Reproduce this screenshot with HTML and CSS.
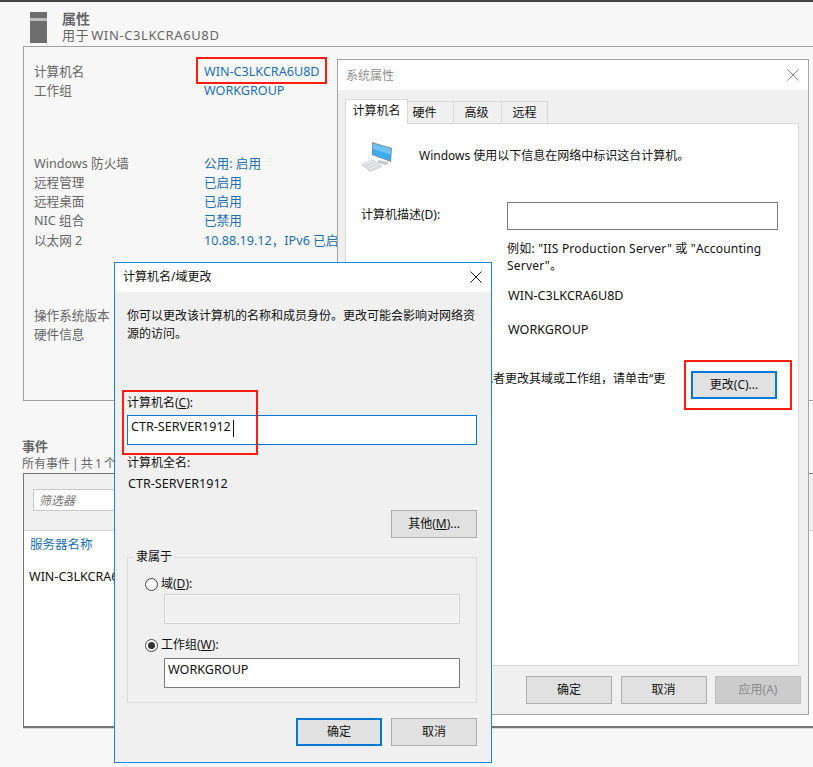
FILE: index.html
```html
<!DOCTYPE html>
<html lang="zh-CN">
<head>
<meta charset="utf-8">
<title>属性</title>
<link rel="stylesheet" href="styles.css">
</head>
<body>
<div class="desktop">
  <div class="topbar"></div>
  <header class="head">
    <div class="server-icon"><span class="server-band"></span></div>
    <div class="head-text">
      <h1 class="head-title">属性</h1>
      <div class="head-sub">用于 WIN-C3LKCRA6U8D</div>
    </div>
  </header>
  <section class="props">
    <div class="prop-group group-a">
      <span class="k">计算机名</span><span class="v">WIN-C3LKCRA6U8D</span>
      <span class="k">工作组</span><span class="v">WORKGROUP</span>
    </div>
    <div class="prop-group group-b">
      <span class="k">Windows 防火墙</span><span class="v">公用: 启用</span>
      <span class="k">远程管理</span><span class="v">已启用</span>
      <span class="k">远程桌面</span><span class="v">已启用</span>
      <span class="k">NIC 组合</span><span class="v">已禁用</span>
      <span class="k">以太网 2</span><span class="v">10.88.19.12，IPv6 已启用</span>
    </div>
    <div class="prop-group group-c">
      <span class="k">操作系统版本</span><span class="v"></span>
      <span class="k">硬件信息</span><span class="v"></span>
    </div>
  </section>
  <section class="events">
    <h2 class="events-title">事件</h2>
    <div class="events-sub">所有事件 | 共 1 个</div>
    <div class="events-box">
      <div class="filter-bar"><div class="filter">筛选器</div></div>
      <div class="col-head">服务器名称</div>
      <div class="event-row">WIN-C3LKCRA6U8D</div>
    </div>
  </section>

  <div class="window sys">
    <div class="titlebar"><span class="title-muted">系统属性</span>
      <svg class="close close-sys" viewBox="0 0 12 12" width="12" height="12"><path d="M.5.5l11 11M11.5.5l-11 11" class="close-muted"/></svg>
    </div>
    <div class="sys-body">
      <div class="tabs">
        <div class="tab active">计算机名</div>
        <div class="tab tab-hw">硬件</div>
        <div class="tab tab-adv">高级</div>
        <div class="tab tab-rem">远程</div>
      </div>
      <div class="pane">
        <div class="intro">
          <svg class="pc" viewBox="0 0 34 32" width="34" height="32">
            <path d="M1 24.5L13 19l10 8-13 5z" fill="#d6dadd"/>
            <path d="M4 25l9-4M7 27l9-4M10 29l9-4" stroke="#f4f5f6" stroke-width="1" fill="none"/>
            <path d="M18 20l10 2 0 2-3 1-7-2z" fill="#c3c8cc"/>
            <path d="M12 2l20 6-1 14-19-7z" fill="#7f8b95"/>
            <path d="M12.8 3.4l18.4 5.3-.9 12.3-17.5-6.5z" fill="#3fabef"/>
            <path d="M12.8 3.4l18.4 5.3-.4 6-18-6z" fill="#6fc2f3"/>
          </svg>
          <span>Windows 使用以下信息在网络中标识这台计算机。</span>
        </div>
        <div class="desc-row">
          <label class="desc-label">计算机描述(D):</label>
          <div class="field desc-field"></div>
        </div>
        <p class="example">例如: "IIS Production Server" 或 "Accounting Server"。</p>
        <div class="info info-name">WIN-C3LKCRA6U8D</div>
        <div class="info info-group">WORKGROUP</div>
        <div class="change-row">
          <span class="change-text">要重命名这台计算机或者更改其域或工作组，请单击“更</span>
          <button class="btn primary">更改(C)...</button>
        </div>
      </div>
      <div class="sys-actions">
        <button class="btn">确定</button>
        <button class="btn">取消</button>
        <button class="btn disabled">应用(A)</button>
      </div>
    </div>
  </div>

  <div class="window change">
    <div class="titlebar"><span>计算机名/域更改</span>
      <svg class="close" viewBox="0 0 12 12" width="12" height="12"><path d="M.5.5l11 11M11.5.5l-11 11" class="close-dark"/></svg>
    </div>
    <div class="change-body">
      <p class="change-intro">你可以更改该计算机的名称和成员身份。更改可能会影响对网络资源的访问。</p>
      <div class="name-label">计算机名(<u>C</u>):</div>
      <div class="field name-field"><span>CTR-SERVER1912</span><i class="caret"></i></div>
      <div class="full-label">计算机全名:</div>
      <div class="full-value">CTR-SERVER1912</div>
      <div class="more-row"><button class="btn">其他(<u>M</u>)...</button></div>
      <fieldset class="member">
        <legend>隶属于</legend>
        <div class="radio-row"><i class="radio"></i>域(<u>D</u>):</div>
        <div class="field sub-field off"></div>
        <div class="radio-row second"><i class="radio on"></i>工作组(<u>W</u>):</div>
        <div class="field sub-field wg">WORKGROUP</div>
      </fieldset>
      <div class="change-actions">
        <button class="btn primary">确定</button>
        <button class="btn">取消</button>
      </div>
    </div>
  </div>

  <div class="mark mark-name"></div>
  <div class="mark mark-input"></div>
  <div class="mark mark-button"></div>
</div>
</body>
</html>
```

FILE: styles.css
```css
* { box-sizing: border-box; }
html, body { margin: 0; padding: 0; }
body {
  width: 813px; height: 767px; overflow: hidden; background: #f7f7f7;
  font: 12px/18px "Noto Sans", "Noto Sans CJK SC", sans-serif; color: #111;
}
.desktop { position: relative; width: 813px; height: 767px; overflow: hidden; }
.topbar { height: 2px; background: #444; }

.head { display: flex; height: 44px; padding: 10px 0 0 30px; }
.server-icon { width: 17px; height: 31px; background: #6e6e6e; padding-top: 6px; }
.server-band { display: block; height: 3px; background: #bdbdbd; }
.head-text { margin: -1px 0 0 15px; color: #666; }
.head-title { margin: 0; font-size: 14px; line-height: 15px; font-weight: 700; color: #666; }
.head-sub { font-size: 13px; line-height: 18px; letter-spacing: .6px; word-spacing: -2px; }

.props {
  width: 800px; height: 355px; margin-left: 23px;
  border: 1px solid #a0a0a0; padding: 15px 0 0 10px; background: #f7f7f7;
}
.prop-group { display: grid; grid-template-columns: 170px 1fr; grid-auto-rows: 19.3px; white-space: nowrap; line-height: 19px; font-size: 12.6px; }
.group-b { margin-top: 53px; }
.group-c { margin-top: 56px; }
.k { color: #666; }
.v { color: #1c70b8; }

.events { margin: 37px 0 0 22px; width: 801px; }
.events-title { margin: 0; font-size: 13px; line-height: 16px; font-weight: 700; color: #666; }
.events-sub { color: #666; font-size: 12px; line-height: 16px; margin-top: 2px; word-spacing: -1px; }
.events-box {
  height: 255px; margin: 1px 0 0 1px; background: #fff;
  border: 1px solid #777; border-width: 1px 1px 2px 1px;
  box-shadow: 0 1px 0 #ddd;
}
.filter-bar { height: 57px; background: #f0f0f0; border-bottom: 1px solid #d4d4d4; padding: 15px 0 0 9px; }
.filter { width: 300px; height: 22px; background: #fff; border: 1px solid #c8c8c8; padding: 1px 0 0 5px; color: #777; font-style: italic; line-height: 20px; }
.col-head { color: #1c70b8; padding: 5px 0 0 6px; font-size: 12.5px; }
.event-row { padding: 14px 0 0 5px; font-size: 12.5px; color: #111; }

.window { position: absolute; }
.titlebar { display: flex; align-items: center; justify-content: space-between; height: 30px; background: #fff; }
.close-muted { stroke: #8a8a8a; stroke-width: 1; fill: none; }
.close-dark { stroke: #222; stroke-width: 1; fill: none; }

.sys { left: 337px; top: 59px; width: 472px; height: 656px; border: 1px solid #a3a3a3; background: #f0f0f0; }
.sys .titlebar { padding: 1px 9px 0 8px; }
.close-sys { margin-top: -2px; }
.title-muted { color: #8f8f8f; }
.sys-body { padding: 9px 7px 0 7px; }
.tabs { display: flex; align-items: flex-end; height: 24px; position: relative; z-index: 1; }
.tab { height: 22px; text-align: center; background: #f0f0f0; border: 1px solid #d9d9d9; border-left: 0; border-bottom: 0; line-height: 21px; }
.tab.active { width: 63px; height: 25px; background: #fff; border-left: 1px solid #d9d9d9; margin-bottom: -1px; line-height: 22px; }
.tab-hw { width: 46px; padding-right: 12px; }
.tab-adv { width: 48px; padding-right: 2px; }
.tab-rem { width: 46px; }
.pane { width: 454px; height: 543px; background: #fff; border: 1px solid #d9d9d9; padding: 0 0 0 15px; }
.intro { display: flex; align-items: center; height: 48px; padding-top: 15px; margin-left: -1px; }
.pc { flex: none; margin-right: 25px; }
.desc-row { display: flex; align-items: center; margin-top: 30px; height: 28px; }
.desc-label { width: 146px; margin-bottom: 2px; }
.field { background: #fff; border: 1px solid #7a7a7a; }
.desc-field { width: 271px; height: 28px; }
.example { margin: 10px 0 0 146px; width: 285px; line-height: 17px; letter-spacing: .2px; color: #111; }
.info { margin-left: 147px; font-size: 12.6px; }
.info-name { margin-top: 13px; }
.info-group { margin-top: 16px; }
.change-row { display: flex; align-items: flex-start; margin-top: 32px; white-space: nowrap; }
.change-text { width: 330px; flex: none; margin-top: -1px; padding-left: 12px; }
.btn {
  width: 86px; height: 28px; padding: 0; background: #e1e1e1; border: 1px solid #adadad;
  font: inherit; color: #111; line-height: 24px;
}
.btn.primary { border: 2px solid #0078d7; }
.btn.disabled { background: #ccc; color: #8a8a8a; border-color: #bfbfbf; }
.sys-actions { display: flex; justify-content: flex-end; gap: 8.5px; margin-top: 10px; }

.change { left: 114px; top: 262px; width: 378px; height: 501px; border: 1px solid #1a86e0; background: #f0f0f0; }
.change .titlebar { padding: 0 9px 2px 8px; height: 29px; }
.change-body { padding: 15px 14px 0 12px; }
.change-intro { margin: 0; line-height: 18px; height: 72px; }
.name-label { line-height: 18px; height: 18px; margin-top: 15px; }
.name-field { display: flex; align-items: center; width: 350px; height: 30px; margin-top: 3px; border-color: #0078d7; padding: 0 0 6px 3px; font-size: 12.6px; }
.caret { display: block; width: 1px; height: 17px; background: #111; margin: 3px 0 0 2px; }
.full-label { margin-top: 9px; }
.full-value { margin: 3px 0 0 1px; font-size: 12.6px; }
.more-row { display: flex; justify-content: flex-end; margin-top: 17px; }
.member { width: 350px; height: 154px; margin: 11px 0 0 0; padding: 10px 0 0 0; border: 1px solid #dcdcdc; }
.member legend { padding: 0 2px; margin-left: 6px; line-height: 16px; }
.radio-row { display: flex; align-items: center; height: 18px; margin-left: 17px; }
.radio { display: block; width: 13px; height: 13px; border: 1px solid #444; border-radius: 50%; background: #fff; margin-right: 3px; position: relative; }
.radio.on::after { content: ""; position: absolute; left: 2px; top: 2px; width: 7px; height: 7px; border-radius: 50%; background: #333; }
.sub-field { width: 296px; height: 30px; margin: 1px 0 0 36px; padding: 2px 0 0 3px; font-size: 12.6px; line-height: 18px; }
.sub-field.wg { margin-top: 4px; }
.sub-field.off { background: #f0f0f0; border-color: #d0d0d0; box-shadow: inset 0 0 0 1px #fafafa; }
.radio-row.second { margin-top: 12px; }
.change-actions { display: flex; justify-content: flex-end; gap: 9px; margin-top: 15px; }

.mark { position: absolute; border: 2px solid #ff1d12; pointer-events: none; }
.mark-name { left: 196px; top: 57px; width: 131px; height: 27px; }
.mark-input { left: 122px; top: 390px; width: 136px; height: 65px; }
.mark-button { left: 684px; top: 360px; width: 108px; height: 50px; }
```
